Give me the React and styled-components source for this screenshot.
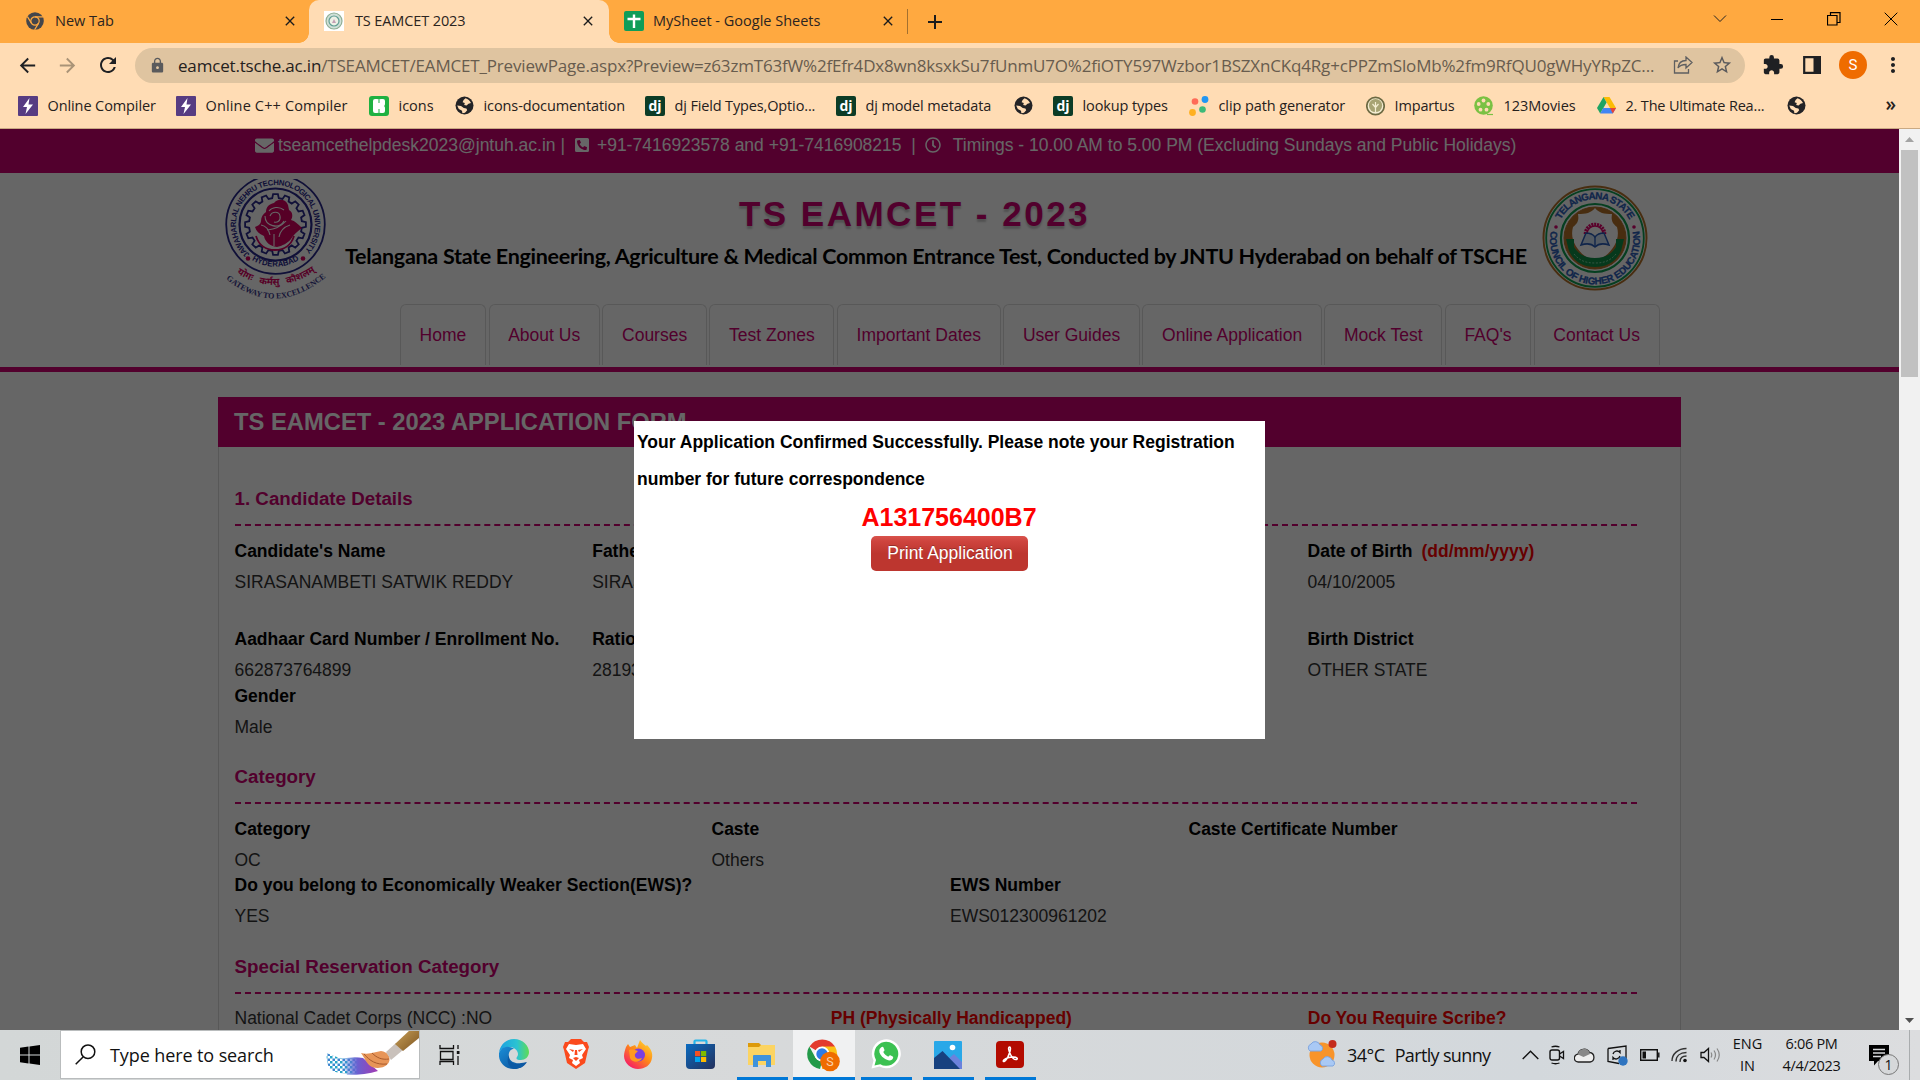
import React from 'react';
import styled, { createGlobalStyle } from 'styled-components';
import { MdLock, MdExtension, MdMoreVert, MdStarBorder, MdArrowBack, MdArrowForward, MdRefresh, MdClose } from 'react-icons/md';
import { FaEnvelope, FaPhoneSquareAlt, FaRegClock } from 'react-icons/fa';

const Global = createGlobalStyle`
  * { box-sizing: border-box; }
  body { margin: 0; overflow: hidden; }
  svg { display: block; flex: none; }
`;

const ui = '"Open Sans", "Noto Sans", sans-serif';
const arial = '"Liberation Sans", Arial, sans-serif';
const magenta = '#cc0070';

const Screen = styled.div`
  width: 1920px;
  height: 1080px;
  display: flex;
  flex-direction: column;
  overflow: hidden;
  font-family: ${ui};
`;

/* ---------- browser chrome ---------- */

const TabStrip = styled.div`
  height: 43px;
  background: #ffa940;
  display: flex;
  align-items: center;
`;

const Tab = styled.div`
  width: ${p => p.$w}px;
  height: 43px;
  padding: 0 ${p => p.$end ?? 13}px 2px ${p => p.$start ?? 15}px;
  display: flex;
  align-items: center;
  gap: ${p => p.$gap ?? 11}px;
  font-size: 14.5px;
  letter-spacing: ${p => p.$ls || 0}px;
  color: #2b2420;
  white-space: nowrap;
  position: relative;
  border-radius: 10px 10px 0 0;
  background: ${p => (p.$active ? '#ffdcb4' : 'transparent')};
  &::before, &::after {
    content: '';
    display: ${p => (p.$active ? 'block' : 'none')};
    position: absolute;
    bottom: 0;
    width: 10px;
    height: 10px;
  }
  &::before { left: -10px; background: radial-gradient(circle at 0 0, transparent 9.5px, #ffdcb4 10px); }
  &::after { right: -10px; background: radial-gradient(circle at 100% 0, transparent 9.5px, #ffdcb4 10px); }
  > svg:last-child { margin-left: auto; }
`;

const TabDivider = styled.div`
  width: 1px;
  height: 25px;
  margin: 0 19px 0 4px;
  background: #a3702f;
`;

const WindowButtons = styled.div`
  margin-left: auto;
  padding: 0 22px 6px 0;
  display: flex;
  align-items: center;
  gap: 43px;
`;

const Toolbar = styled.div`
  height: 44px;
  padding: 0 14px 0 16px;
  background: #ffdcb4;
  display: flex;
  align-items: center;
  color: #1f2023;
`;

const NavButtons = styled.div`
  width: 119px;
  display: flex;
  align-items: center;
  gap: 17px;
`;

const UrlBar = styled.div`
  width: 1610px;
  height: 35px;
  border-radius: 18px;
  background: #dfc4a0;
  padding: 0 12px 0 14px;
  display: flex;
  align-items: center;
  color: #5a5a5c;
`;

const UrlText = styled.div`
  margin-left: 12px;
  width: 1495px;
  font-size: 17px;
  letter-spacing: -0.18px;
  white-space: nowrap;
  color: #685c4e;
  b { font-weight: 400; color: #25211d; }
`;

const StarSlot = styled.span`
  margin-left: auto;
`;

const ToolbarIcons = styled.div`
  flex: 1;
  display: flex;
  align-items: center;
  gap: 18px;
  padding-left: 17px;
  > svg:nth-child(2) { margin-left: 1px; }
  > svg:last-child { margin-left: -4px; }
`;

const Avatar = styled.div`
  width: 28px;
  height: 28px;
  border-radius: 50%;
  background: #ef6c00;
  color: #fff;
  display: flex;
  align-items: center;
  justify-content: center;
  font: 15px Roboto, sans-serif;
`;

const Bookmarks = styled.div`
  height: 42px;
  padding: 0 0 4px 18px;
  background: #ffdcb4;
  border-bottom: 1px solid #c9a983;
  display: flex;
  align-items: center;
  color: #26211c;
`;

const Bookmark = styled.div`
  width: ${p => p.$w}px;
  display: flex;
  align-items: center;
  gap: 9.5px;
  font-size: 14.5px;
  letter-spacing: ${p => p.$ls ?? 0}px;
  white-space: nowrap;
`;

const IconTile = styled.span`
  width: 20px;
  height: 20px;
  flex: none;
  border-radius: ${p => p.$r || 1}px;
  background: ${p => p.$bg};
  color: #fff;
  display: flex;
  align-items: center;
  justify-content: center;
  font: bold 14px "Open Sans", sans-serif;
  letter-spacing: 0;
`;

const More = styled.div`
  margin-left: auto;
  padding: 0 24px 4px 0;
  font-size: 19px;
  font-weight: 600;
`;

/* ---------- web page ---------- */

const Viewport = styled.div`
  height: 901px;
  display: flex;
`;

const PageArea = styled.div`
  position: relative;
  width: 1899px;
  height: 901px;
  overflow: hidden;
  background: #fff;
  font-family: ${arial};
  font-size: 17.5px;
  color: #333;
`;

const Scrollbar = styled.div`
  width: 21px;
  padding: 8px 0 7px;
  background: #f1f1f1;
  display: flex;
  flex-direction: column;
  align-items: center;
`;

const Thumb = styled.div`
  width: 17px;
  height: 227px;
  margin: 8px 0 auto;
  background: #c1c1c1;
`;

const ContactBar = styled.div`
  height: 44px;
  padding: 0 0 12px 255px;
  background: ${magenta};
  color: #fff;
  display: flex;
  align-items: center;
  white-space: pre;
`;

const Contact = styled.span`
  display: flex;
  align-items: center;
  gap: ${p => p.$gap}px;
  margin-right: ${p => p.$end || 0}px;
`;

const Banner = styled.div`
  height: 131px;
  padding: 5px 251px 0 224px;
  display: flex;
  justify-content: space-between;
`;

const LogoSlot = styled.div`
  padding-top: 7px;
`;

const BannerText = styled.div`
  display: flex;
  flex-direction: column;
  align-items: center;
  white-space: nowrap;
`;

const BannerTitle = styled.h1`
  margin: 16px 0 0 -43px;
  font: bold 35px/40px ${arial};
  letter-spacing: 2.5px;
  color: ${magenta};
  text-shadow: 0 3px 2px #ccc, 0 0 3px #eee;
`;

const BannerSub = styled.div`
  margin-top: 9px;
  font: bold 21.5px/26px Lato, sans-serif;
  letter-spacing: -0.29px;
  color: #000;
`;

const Menu = styled.nav`
  height: 63px;
  padding-left: 400px;
  display: flex;
  gap: 2.7px;
`;

const MenuItem = styled.a`
  height: 61px;
  padding: 0 18.6px;
  border: 1px solid #ddd;
  border-bottom: 0;
  border-radius: 6px 6px 0 0;
  line-height: 60px;
  color: ${magenta};
  white-space: nowrap;
`;

const Rule = styled.div`
  height: 5px;
  background: ${magenta};
`;

const Panel = styled.section`
  width: 1463px;
  height: 800px;
  margin: 25px 0 0 218px;
  border: 1px solid #ddd;
  border-top: 0;
`;

const PanelTitle = styled.h2`
  height: 50px;
  margin: 0 -1px;
  padding-left: 16px;
  background: ${magenta};
  color: #fff;
  font: bold 23.75px/50px ${arial};
`;

const PanelBody = styled.div`
  padding: 0 15px 0 15.5px;
`;

const Heading = styled.h3`
  width: 1402px;
  margin: ${p => p.$top}px 0 ${p => p.$after ?? 13}px;
  padding-bottom: 10px;
  border-bottom: 2px dashed ${magenta};
  color: ${magenta};
  font: bold 18.75px/30px ${arial};
`;

const Row = styled.div`
  display: grid;
  grid-template-columns: ${p => p.$cols};
  width: 1431px;
  margin-bottom: ${p => p.$gap || 0}px;
  white-space: nowrap;
`;

const Label = styled.div`
  line-height: 25px;
  margin-bottom: 6px;
  font-weight: bold;
  color: ${p => (p.$red ? '#f00' : '#000')};
  span { color: #f00; margin-left: 4px; }
`;

const Value = styled.div`
  line-height: 25px;
`;

const Overlay = styled.div`
  position: absolute;
  inset: 0;
  background: rgba(0, 0, 0, 0.6);
`;

const Modal = styled.div`
  position: absolute;
  left: 634px;
  top: 292px;
  width: 631px;
  height: 318px;
  padding: 3px;
  background: #fff;
  display: flex;
  flex-direction: column;
  align-items: center;
`;

const Message = styled.p`
  width: 100%;
  margin: 0;
  font-weight: bold;
  line-height: 37px;
  color: #000;
`;

const RegNumber = styled.div`
  padding-right: 1px;
  font: bold 25px/38px ${arial};
  color: #f00;
`;

const PrintButton = styled.button`
  width: 157px;
  height: 35px;
  padding: 0 0 1px 1px;
  border: 0;
  border-radius: 5px;
  background: linear-gradient(#d9534c 0, #ce443e 15%, #bd362f 50%, #bd362f);
  color: #fff;
  font: 17.5px ${arial};
  text-shadow: 0 -1px 0 rgba(0, 0, 0, 0.25);
`;

/* ---------- taskbar ---------- */

const Taskbar = styled.div`
  height: 50px;
  background: linear-gradient(90deg, #d3d7d7, #d7d9da 40%, #d3d8dc 80%, #dcdddf);
  display: flex;
  color: #111;
`;

const Start = styled.div`
  width: 60px;
  display: flex;
  align-items: center;
  justify-content: center;
`;

const SearchBox = styled.div`
  width: 360px;
  height: 49px;
  padding-left: 14px;
  border: 1px solid #b9bcbd;
  background: #fff;
  display: flex;
  align-items: center;
  font-size: 18px;
  letter-spacing: -0.1px;
  white-space: nowrap;
  overflow: hidden;
  > span { width: 219px; margin-left: 14px; }
`;

const Apps = styled.div`
  width: 886px;
  display: flex;
`;

const TaskButton = styled.div`
  width: ${p => p.$w || 62}px;
  height: 50px;
  padding: ${p => p.$top ?? 9}px ${p => p.$end || 0}px 0 0;
  display: flex;
  flex-direction: column;
  align-items: center;
  justify-content: space-between;
  background: ${p => (p.$active ? '#f0f1f2' : 'transparent')};
  &::after {
    content: '';
    width: ${p => (p.$active ? 62 : 51)}px;
    height: 3px;
    background: ${p => (p.$open ? '#0078d7' : 'transparent')};
  }
`;

const Tray = styled.div`
  flex: 1;
  display: flex;
  align-items: center;
  white-space: nowrap;
`;

const Weather = styled.div`
  width: 216px;
  display: flex;
  align-items: center;
  gap: 10px;
  font-size: 18px;
  letter-spacing: -0.5px;
  span:last-child { letter-spacing: -0.65px; }
`;

const TrayIcons = styled.div`
  width: 199px;
  display: flex;
  align-items: center;
  justify-content: space-between;
`;

const Stack = styled.div`
  width: ${p => p.$w}px;
  padding-left: 1px;
  text-align: center;
  font-size: 14.5px;
  line-height: 22.5px;
  letter-spacing: ${p => p.$ls || 0}px;
`;

const Notifications = styled.div`
  position: relative;
  width: 43px;
  height: 50px;
  margin-left: 18px;
  padding: 15px 0 0 2px;
  border-right: 1px solid #a9acae;
`;

const Badge = styled.span`
  position: absolute;
  left: 11px;
  top: 24px;
  width: 21px;
  height: 21px;
  border: 1px solid #777;
  border-radius: 50%;
  background: #d6d8da;
  text-align: center;
  font-size: 14px;
  line-height: 19px;
`;

/* ---------- drawings ---------- */

const ChromeMono = () => (
  <svg width="18" height="18" viewBox="0 0 18 18">
    <circle cx="9" cy="9" r="8.8" fill="#44464b" />
    <circle cx="9" cy="9" r="4.2" fill="none" stroke="#ffa940" strokeWidth="1.2" />
    <path d="M9 4.8h8M5.4 11.1L1.4 4.6M12.6 11.1L8.6 17.8" stroke="#ffa940" strokeWidth="1.2" />
  </svg>
);

const CrestIcon = () => (
  <svg width="20" height="20" viewBox="0 0 20 20">
    <rect width="20" height="20" fill="#fff" />
    <circle cx="10" cy="10" r="8" fill="#cfe0d8" stroke="#8fae95" strokeWidth="1.2" />
    <circle cx="10" cy="10" r="5" fill="#eef0e6" stroke="#5f9e93" strokeWidth="1.2" />
    <path d="M8 12l2-4 2 4z" fill="#c3a0b4" />
  </svg>
);

const SheetIcon = () => (
  <svg width="20" height="20" viewBox="0 0 20 20">
    <rect width="20" height="20" rx="2" fill="#0f9d58" />
    <path d="M10 3.5v13.5M3.5 8h13" stroke="#fff" strokeWidth="2.4" />
  </svg>
);

const Globe = () => (
  <svg width="19" height="19" viewBox="0 0 19 19">
    <circle cx="9.5" cy="9.5" r="9" fill="#232326" />
    <path d="M10.500 2.200c2.500.8 4.500 2.600 5.500 4.800l-2.500.8-2 1.800-2.300-.6.600-2-2.200-.8 1-2.200zM2.200 9.500l3.800.6 2.800 1.900 2.600.6.800 1.600-2.200 2.600-2.600.4-.4-2.400-3.200-1.800z" fill="#ffdcb4" />
  </svg>
);

const Bolt = () => (
  <IconTile $bg="#573c82">
    <svg width="12" height="16" viewBox="0 0 12 16"><path d="M7.5 0L1 9h4l-1.500 7L11 6.500H6.500z" fill="#fff" /></svg>
  </IconTile>
);

const Icons8 = () => (
  <IconTile $bg="#1fb141" $r={3}>
    <svg width="12" height="14" viewBox="0 0 12 14"><path d="M0 2q0-2 2-2h2q1.500 0 2 1 .5-1 2-1h2q2 0 2 2v3q0 1.500-1 2 1 .5 1 2v3q0 2-2 2H8q-1.500 0-2-1-.5 1-2 1H2q-2 0-2-2z" fill="#fff" /><path d="M6 1v3M6 10v3" stroke="#1fb141" strokeWidth="1" /></svg>
  </IconTile>
);

const Dj = () => <IconTile $bg="#0c3c26" $r={2}>dj</IconTile>;

const Dots = () => (
  <svg width="20" height="20" viewBox="0 0 20 20">
    <circle cx="16" cy="3.500" r="3.400" fill="#2196f3" />
    <circle cx="6" cy="5.500" r="3.300" fill="#ff6b57" />
    <circle cx="13.500" cy="13.500" r="3.300" fill="#3dba78" />
    <circle cx="3.500" cy="16.500" r="3.400" fill="#ffb020" />
  </svg>
);

const TreeIcon = () => (
  <svg width="19" height="20" viewBox="0 0 19 20">
    <circle cx="9.500" cy="10" r="8.700" fill="#f3edd2" stroke="#6d6a43" strokeWidth="1.700" />
    <circle cx="9.500" cy="9.500" r="6.600" fill="#a7a373" />
    <path d="M9.500 6v11M6.500 8l3 3.500 3-3.500" stroke="#f3edd2" strokeWidth="1.200" fill="none" />
  </svg>
);

const Reel = () => (
  <svg width="20" height="20" viewBox="0 0 20 20">
    <circle cx="9.500" cy="9.500" r="9.300" fill="#7ac143" />
    <g fill="#ffdcb4">
      <circle cx="9.500" cy="4.500" r="1.900" /><circle cx="4.700" cy="8" r="1.900" /><circle cx="14.300" cy="8" r="1.900" />
      <circle cx="6.500" cy="13.700" r="1.900" /><circle cx="12.500" cy="13.700" r="1.900" />
    </g>
    <path d="M13 18.500h6" stroke="#7ac143" strokeWidth="1.200" />
  </svg>
);

const Drive = () => (
  <svg width="19" height="17" viewBox="0 0 19 17">
    <path d="M6.500 0h6L19 11h-6z" fill="#fbbc04" />
    <path d="M6.500 0l3.100 5.400L3.200 16.500 0 11z" fill="#1fa463" />
    <path d="M6.200 11H19l-3.200 5.500H3.200z" fill="#4285f4" />
    <path d="M13 11h6l-3.200 5.500z" fill="#ea4335" />
  </svg>
);

const gearPoints = (() => {
  const pts = [];
  const n = 16;
  for (let i = 0; i < n; i++) {
    [[-0.32, 26.5], [-0.2, 30.5], [0.2, 30.5], [0.32, 26.5]].forEach(([o, r]) => {
      const a = ((i + o) / n) * Math.PI * 2;
      pts.push(`${(51.5 + r * Math.sin(a)).toFixed(1)},${(46.5 - r * Math.cos(a)).toFixed(1)}`);
    });
  }
  return pts.join(' ');
})();

const JntuLogo = () => (
  <svg width="106" height="123" viewBox="0 0 106 123">
    <defs>
      <path id="jTop" d="M25.700 76.200A39.400 39.400 0 1 1 77.300 76.200" />
      <path id="jBottom" d="M15.800 71A45 45 0 0 0 87.200 71" />
      <path id="jHindi" d="M8 92Q51 123 96 90" />
      <path id="jGate" d="M2 101Q51 141 102 99" />
      <clipPath id="jClip"><rect y="1" width="106" height="122" /></clipPath>
    </defs>
    <g fill="none" stroke="#2a2a8c" clipPath="url(#jClip)">
      <circle cx="51.500" cy="46.500" r="49.300" strokeWidth="1.800" />
      <circle cx="51.500" cy="46.500" r="36" strokeWidth="2.200" />
      <polygon points={gearPoints} strokeWidth="1.800" />
    </g>
    <g fontFamily="Liberation Sans" fontWeight="bold" fill="#2a2a8c" fontSize="7.800">
      <text><textPath href="#jTop" textLength="186">JAWAHARLAL NEHRU TECHNOLOGICAL UNIVERSITY</textPath></text>
      <text><textPath href="#jBottom" startOffset="50%" textAnchor="middle">HYDERABAD</textPath></text>
    </g>
    <g fill="#d8005f">
      <circle cx="24" cy="80.500" r="2.300" /><circle cx="79" cy="80.500" r="2.300" />
      <path d="M50 25c4-5 12-4 14 2l1 5c4 2 4 7 2 10 4 1 7 4 11 8-5 4-9 7-11 11-3 4-9 7-14 8-7-1-12-5-13-11-5-2-8-5-9-9 3-1 6-3 6-6 0-4 2-7 5-9 0-5 3-8 8-9z" />
    </g>
    <path d="M46 38c2-5 9-5 10 0s-3 7-6 6M41 38c0 10 14 14 19 5M43 52c6-1 13-2 19-9M50 56v12M37 47c5 1 8 5 9 10M66 47c-6 2-10 6-11 12M45 33c3-4 10-5 15-1" fill="none" stroke="#fff" strokeWidth="1.100" />
    <path d="M32 58c3 10 11 14 19 14s16-4 19-14" fill="none" stroke="#d8005f" strokeWidth="1.800" />
    <text fontFamily="Noto Sans Devanagari, Noto Sans, sans-serif" fontWeight="bold" fontSize="9.500" fill="#d8005f">
      <textPath href="#jHindi" startOffset="50%" textAnchor="middle" wordSpacing="5">योगः कर्मसु कौशलम्</textPath>
    </text>
    <text fontFamily="Liberation Serif" fontWeight="bold" fontSize="8" fill="#39398c">
      <textPath href="#jGate" startOffset="50%" textAnchor="middle">GATEWAY TO EXCELLENCE</textPath>
    </text>
  </svg>
);

const TscheLogo = () => (
  <svg width="106" height="106" viewBox="0 0 106 106">
    <defs>
      <path id="tTop" d="M17.500 37A39 39 0 0 1 88.500 37" />
      <path id="tBottom" d="M9 45A45 45 0 1 0 97 45" />
    </defs>
    <g fill="none">
      <circle cx="53" cy="53" r="51.500" fill="#fff" stroke="#b5722a" strokeWidth="2" />
      <circle cx="53" cy="53" r="48.800" stroke="#0f9d50" strokeWidth="1.800" />
      <circle cx="53" cy="53" r="34" stroke="#0f9d50" strokeWidth="2.200" />
      <circle cx="53" cy="53" r="31" fill="#b5722a" stroke="#b5722a" strokeWidth="1" />
    </g>
    <g fontFamily="Liberation Sans" fontWeight="bold" fontSize="9.800" fill="#2a5cb8" stroke="#2a5cb8" strokeWidth=".3">
      <text><textPath href="#tTop" startOffset="50%" textAnchor="middle" textLength="84">TELANGANA STATE</textPath></text>
      <text><textPath href="#tBottom" startOffset="50%" textAnchor="middle" textLength="158">COUNCIL OF HIGHER EDUCATION</textPath></text>
    </g>
    <circle cx="14" cy="42" r="1.800" fill="#d6006e" /><circle cx="92" cy="42" r="1.800" fill="#d6006e" />
    <path d="M53 23c4 5 9 6 17 6-1 6 0 9 5 13 4 14-6 28-22 35-16-7-26-21-22-35 5-4 6-7 5-13 8 0 13-1 17-6z" fill="#fff" />
    <path d="M43.500 49a9.500 9.500 0 0 1 19 0" fill="none" stroke="#e0006a" strokeWidth="3.600" strokeDasharray="2 .8" />
    <path d="M45 49a8 8 0 0 1 16 0" fill="#fff" stroke="#e0006a" strokeWidth="1.500" />
    <path d="M39 60l5-12q6 0 9 4 3-4 9-4l5 12q-9-3-14 2-5-5-14-2z" fill="#cfe0f5" stroke="#2a5cb8" strokeWidth="1.500" />
    <path d="M53 52v10" stroke="#2a5cb8" strokeWidth="1.400" />
    <path d="M24 54h8v8c5 8 12 11 21 11s16-3 21-11v-8h8l-3 12c-5 11-14 16-26 16s-21-5-26-16z" fill="#118f48" />
    <path d="M32 69c6 7 12 9 21 9s15-2 21-9" fill="none" stroke="#7fcf9f" strokeWidth="1" strokeDasharray="2 1.500" />
  </svg>
);

const Brush = () => (
  <svg width="94" height="47" viewBox="0 0 94 47">
    <defs>
      <pattern id="dots" width="5" height="5" patternUnits="userSpaceOnUse">
        <rect width="2.500" height="2.500" fill="#28a5c8" /><rect x="2.500" y="2.500" width="2.500" height="2.500" fill="#3b86cf" />
      </pattern>
      <linearGradient id="paint"><stop offset="0" stopColor="#4a86d8" stopOpacity=".1" /><stop offset=".45" stopColor="#6b5fd0" /><stop offset="1" stopColor="#a33bb3" /></linearGradient>
      <linearGradient id="wood" x1="0" y1="0" x2="1" y2="1"><stop offset="0" stopColor="#caa25a" /><stop offset="1" stopColor="#7d5420" /></linearGradient>
    </defs>
    <path d="M2 22c8 4 14 6 22 5l12 0v16c-12 0-24 0-30-4-4-5-5-10-4-17z" fill="url(#dots)" />
    <path d="M16 28q12-3 22-1l15 13q-12 4-31 4z" fill="url(#paint)" />
    <path d="M36 22c8 2 14-1 20-2 7 1 10 6 8 11-3 6-11 7-17 5-6-3-7-9-11-14z" fill="#e79558" />
    <path d="M39 23c6 7 12 11 23 10M47 22c5 5 10 7 17 6" stroke="#a85a2c" fill="none" strokeWidth="1" />
    <path d="M61 21l10-9 7 7-12 10z" fill="#c9c1bb" />
    <path d="M70 13L86 -2h8v9L78 20z" fill="url(#wood)" />
  </svg>
);

const Edge = () => (
  <svg width="30" height="30" viewBox="0 0 30 30">
    <defs>
      <linearGradient id="eTop"><stop offset="0" stopColor="#1ba0e1" /><stop offset=".6" stopColor="#2bc3d2" /><stop offset="1" stopColor="#5fdc54" /></linearGradient>
      <linearGradient id="eLow" x1="0" y1="0" x2="1" y2="1"><stop offset="0" stopColor="#1a8fd8" /><stop offset="1" stopColor="#0b4a94" /></linearGradient>
    </defs>
    <path d="M0 14C1 5 8 0 15 0c9 0 15 7 15 13 0 5-4 8-8 8-5 0-5-2-4-3 3-4-1-10-8-10C5 8 1 11 0 14z" fill="url(#eTop)" />
    <path d="M0 14c2-5 6-7 10-6 2 0 4 1 5 2-4 0-6 4-5 8 1 5 7 7 12 6 3 0 5-1 6-1-3 5-8 7-13 7C6 30-1 23 0 14z" fill="url(#eLow)" />
    <path d="M10 16c-1 7 5 10 11 9 3 0 5-1 6-2-3 5-7 7-12 7-6-2-8-9-5-14z" fill="#0c59a4" />
  </svg>
);

const Brave = () => (
  <svg width="26" height="30" viewBox="0 0 26 30">
    <path d="M8 0h10l3 3 3 0 2 5-1 3-3 13-9 6-9-6L1 11 0 8l2-5 3 0z" fill="#fb4a1d" />
    <path d="M6 5l7 1 7-1 3 5-4 6 1 3-4 2 1 3-4 3-4-3 1-3-4-2 1-3-4-6z" fill="#fff" />
    <path d="M6 10l5 1-1 2zM20 10l-5 1 1 2zM10 19l3-1 3 1-3 3zM12 11h2l.5 5h-3z" fill="#fb4a1d" />
  </svg>
);

const Firefox = () => (
  <svg width="29" height="29" viewBox="0 0 29 29">
    <defs><linearGradient id="ff" x1="1" y1="0" x2=".2" y2="1"><stop offset="0" stopColor="#ffe53b" /><stop offset=".5" stopColor="#ff8a16" /><stop offset="1" stopColor="#f5156c" /></linearGradient></defs>
    <path d="M2 7l2-3 2 3 5-2 2 3 3-8c2 3 4 4 6 6l1-1c4 4 6 8 5 13-1 7-7 11-14 11S0 23 0 16c0-3 1-6 2-9z" fill="url(#ff)" />
    <circle cx="14.500" cy="15" r="6.500" fill="#7a3fe0" />
    <path d="M5 10c3-1 6 0 9 1l-3 3c-1 4 3 6 7 4-2 5-10 5-12 0z" fill="#ff9a1f" />
  </svg>
);

const Store = () => (
  <svg width="29" height="30" viewBox="0 0 29 30">
    <defs><linearGradient id="st" x1="0" y1="0" x2="1" y2="1"><stop offset="0" stopColor="#0a6bc0" /><stop offset="1" stopColor="#24305c" /></linearGradient></defs>
    <path d="M8.500 7V2.500q0-1 1-1h10q1 0 1 1V7" fill="none" stroke="#26b5ea" strokeWidth="2.200" />
    <path d="M0 5h29v21q0 4-4 4H4q-4 0-4-4z" fill="url(#st)" />
    <path d="M9 12h5.200v5.200H9z" fill="#f25022" /><path d="M15 12h5.200v5.200H15z" fill="#7fba00" />
    <path d="M9 18h5.200v5H9z" fill="#00a4ef" /><path d="M15 18h5.200v5H15z" fill="#ffb900" />
  </svg>
);

const Folder = () => (
  <svg width="28" height="24" viewBox="0 0 28 24">
    <path d="M0 0h11l2 2v3H0z" fill="#dd9a0a" />
    <path d="M0 4h11l2-2h14v20H0z" fill="#fcd462" />
    <path d="M5 13q0-1 1-1h16q1 0 1 1v11h-5v-6h-8v6H5z" fill="#3f93dc" />
  </svg>
);

const ChromeColor = () => (
  <svg width="34" height="34" viewBox="0 0 34 34">
    <path d="M15 15L2.500 7.500A15 15 0 0 1 28 7.500z" fill="#e33b2e" />
    <path d="M15 15V7.500h13A15 15 0 0 1 15 30z" fill="#fbc116" />
    <path d="M2.300 7.500L8.600 19 15 22.500 13 30A15 15 0 0 1 2.300 7.500z" fill="#229a49" />
    <circle cx="15" cy="15" r="7.500" fill="#fff" /><circle cx="15" cy="15" r="5.700" fill="#2c7be5" />
    <circle cx="23" cy="22.500" r="9.800" fill="#ef6c00" />
    <text x="23" y="27" textAnchor="middle" fontFamily="Roboto" fontSize="12.500" fill="#fbd0ac">S</text>
  </svg>
);

const WhatsApp = () => (
  <svg width="30" height="30" viewBox="0 0 30 30">
    <path d="M.5 29.500L2.500 21.500A14.500 14.500 0 1 1 8.500 27.500z" fill="#fff" />
    <path d="M3.500 26.500l1.500-5.500a12 12 0 1 1 4.300 4.200z" fill="#3cc152" />
    <path d="M10 8.500c1-1 2-1 2.500 0l1 2.500c0 1-1 1.500-1.200 2 1 2.200 2.700 3.700 5 4.700.6-.3 1-1.500 2-1.400l2.400 1.200c1 .6.300 2-.5 2.900-2 1.800-5 1-7.700-.8C10 17.300 8 14 8.300 11.500c.1-1.200.8-2.200 1.700-3z" fill="#fff" />
  </svg>
);

const Photos = () => (
  <svg width="28" height="28" viewBox="0 0 28 28">
    <rect width="28" height="28" rx="1" fill="#29a8e8" />
    <path d="M13 19l7-6 8 8v7H13z" fill="#6b82dc" />
    <path d="M0 17L8.500 10 26 28H0z" fill="#17417f" />
    <circle cx="18.500" cy="6.500" r="2.800" fill="#fff" />
  </svg>
);

const Acrobat = () => (
  <svg width="28" height="28" viewBox="0 0 28 28">
    <rect width="28" height="27" rx="4" fill="#b30b00" />
    <path d="M13.700 6c-2 0-1 4 .8 7.500 1.700 3.200 4.200 5.500 6 5 1.700-.8.500-2.600-3-2.600-3.600 0-7.500 1-9.500 2.800-1.500 1.500-.3 2.600 1 1.300 2-2 4-6 5-9.500.6-2.500.7-4.500-.3-4.500z" fill="none" stroke="#fff" strokeWidth="1.500" />
  </svg>
);

const bookmarks = [
  [158, <Bolt />, 'Online Compiler', -0.1],
  [193, <Bolt />, 'Online C++ Compiler', 0.15],
  [86, <Icons8 />, 'icons', 0],
  [190, <Globe />, 'icons-documentation', -0.1],
  [191, <Dj />, 'dj Field Types,Optio...', -0.14],
  [178, <Dj />, 'dj model metadata', -0.12],
  [39, <Globe />, '', 0],
  [136, <Dj />, 'lookup types', -0.1],
  [177, <Dots />, 'clip path generator', -0.1],
  [108, <TreeIcon />, 'Impartus', -0.15],
  [123, <Reel />, '123Movies', -0.05],
  [190, <Drive />, '2. The Ultimate Rea...', -0.18],
  [39, <Globe />, '', 0],
];

const menu = ['Home', 'About Us', 'Courses', 'Test Zones', 'Important Dates', 'User Guides', 'Online Application', 'Mock Test', "FAQ's", 'Contact Us'];

const Field = ({ label, value }) => (
  <div>
    <Label>{label}</Label>
    <Value>{value}</Value>
  </div>
);

const four = 'repeat(4, 357.7px)';

export default function App() {
  return (
    <Screen>
      <Global />
      <TabStrip>
        <Tab $w={309} $start={26} $end={11}><ChromeMono />New Tab<MdClose size={16} color="#1c1c1c" /></Tab>
        <Tab $w={300} $active $ls={-0.12}><CrestIcon />TS EAMCET 2023<MdClose size={16} color="#1c1c1c" /></Tab>
        <Tab $w={294} $end={7} $gap={9}><SheetIcon />MySheet - Google Sheets<MdClose size={16} color="#1c1c1c" /></Tab>
        <TabDivider />
        <svg width="16" height="16" viewBox="0 0 16 16"><path d="M8 1v14M1 8h14" stroke="#1c1c1c" strokeWidth="2" /></svg>
        <WindowButtons>
          <svg width="14" height="8" viewBox="0 0 14 8"><path d="M1 .5l6 6 6-6" fill="none" stroke="#222" /></svg>
          <svg width="14" height="14" viewBox="0 0 14 14"><path d="M1 7.500h12" stroke="#000" /></svg>
          <svg width="14" height="14" viewBox="0 0 14 14"><path d="M.5 3.500h9.500v9.500H.5zM3.500 3V.7h9.500v9.800H10.500" fill="none" stroke="#000" strokeWidth="1.200" /></svg>
          <svg width="14" height="14" viewBox="0 0 14 14"><path d="M.7.7l12.600 12.600M13.300.7L.7 13.300" stroke="#000" /></svg>
        </WindowButtons>
      </TabStrip>

      <Toolbar>
        <NavButtons>
          <MdArrowBack size={23} />
          <MdArrowForward size={23} color="#a99377" />
          <MdRefresh size={24} />
        </NavButtons>
        <UrlBar>
          <MdLock size={17} />
          <UrlText><b>eamcet.tsche.ac.in</b>/TSEAMCET/EAMCET_PreviewPage.aspx?Preview=z63zmT63fW%2fEfr4Dx8wn8ksxkSu7fUnmU7O%2fiOTY597Wzbor1BSZXnCKq4Rg+cPPZmSloMb%2fm9RfQU0gWHyYRpZC...</UrlText>
          <svg width="20" height="18" viewBox="0 0 20 18"><path d="M5 5H1.500v12h14v-4M5 12c.5-5 4-7.500 8-7.500V1l6 5.500-6 5.500V8.500c-3.500 0-6 .5-8 3.500z" fill="none" stroke="#5f5f60" strokeWidth="1.300" /></svg>
          <StarSlot><MdStarBorder size={22} /></StarSlot>
        </UrlBar>
        <ToolbarIcons>
          <MdExtension size={22} />
          <svg width="18" height="18" viewBox="0 0 18 18"><path d="M1.200 1.200h15.600v15.600H1.200z" fill="none" stroke="#1f2023" strokeWidth="2.200" /><path d="M10.500 0H18v18h-7.500z" fill="#1f2023" /></svg>
          <Avatar>S</Avatar>
          <MdMoreVert size={24} />
        </ToolbarIcons>
      </Toolbar>

      <Bookmarks>
        {bookmarks.map(([w, icon, label, ls], i) => (
          <Bookmark key={i} $w={w} $ls={ls}>{icon}{label}</Bookmark>
        ))}
        <More>»</More>
      </Bookmarks>

      <Viewport>
        <PageArea>
          <ContactBar>
            <Contact $gap={4} $end={9}><FaEnvelope size={19} />tseamcethelpdesk2023@jntuh.ac.in |</Contact>
            <Contact $gap={7} $end={9}><FaPhoneSquareAlt size={16} />+91-7416923578 and +91-7416908215  |</Contact>
            <Contact $gap={12}><FaRegClock size={16} />Timings - 10.00 AM to 5.00 PM (Excluding Sundays and Public Holidays)</Contact>
          </ContactBar>
          <Banner>
            <JntuLogo />
            <BannerText>
              <BannerTitle>TS EAMCET - 2023</BannerTitle>
              <BannerSub>Telangana State Engineering, Agriculture &amp; Medical Common Entrance Test, Conducted by JNTU Hyderabad on behalf of TSCHE</BannerSub>
            </BannerText>
            <LogoSlot><TscheLogo /></LogoSlot>
          </Banner>
          <Menu>{menu.map(m => <MenuItem key={m}>{m}</MenuItem>)}</Menu>
          <Rule />
          <Panel>
            <PanelTitle>TS EAMCET - 2023 APPLICATION FORM</PanelTitle>
            <PanelBody>
              <Heading $top={37}>1. Candidate Details</Heading>
              <Row $cols={four} $gap={32}>
                <Field label="Candidate's Name" value="SIRASANAMBETI SATWIK REDDY" />
                <Field label="Father's Name" value="SIRASANAMBETI" />
                <div />
                <Field label={<>Date of Birth <span>(dd/mm/yyyy)</span></>} value="04/10/2005" />
              </Row>
              <Row $cols={four} $gap={1}>
                <Field label="Aadhaar Card Number / Enrollment No." value="662873764899" />
                <Field label="Ration Card" value="28193" />
                <div />
                <Field label="Birth District" value="OTHER STATE" />
              </Row>
              <Row $cols={four}>
                <Field label="Gender" value="Male" />
              </Row>
              <Heading $top={22}>Category</Heading>
              <Row $cols="repeat(3, 477px)">
                <Field label="Category" value="OC" />
                <Field label="Caste" value="Others" />
                <Field label="Caste Certificate Number" />
              </Row>
              <Row $cols="repeat(2, 715.5px)">
                <Field label="Do you belong to Economically Weaker Section(EWS)?" value="YES" />
                <Field label="EWS Number" value="EWS012300961202" />
              </Row>
              <Heading $top={23} $after={12}>Special Reservation Category</Heading>
              <Row $cols="596.25px 477px 357.75px">
                <Value>National Cadet Corps (NCC) :NO</Value>
                <Label $red>PH (Physically Handicapped)</Label>
                <Label $red>Do You Require Scribe?</Label>
              </Row>
            </PanelBody>
          </Panel>
          <Overlay />
          <Modal>
            <Message>Your Application Confirmed Successfully. Please note your Registration number for future correspondence</Message>
            <RegNumber>A131756400B7</RegNumber>
            <PrintButton>Print Application</PrintButton>
          </Modal>
        </PageArea>
        <Scrollbar>
          <svg width="9" height="5" viewBox="0 0 9 5"><path d="M4.500 0L9 5H0z" fill="#a3a3a3" /></svg>
          <Thumb />
          <svg width="9" height="5" viewBox="0 0 9 5"><path d="M4.500 5L9 0H0z" fill="#505050" /></svg>
        </Scrollbar>
      </Viewport>

      <Taskbar>
        <Start>
          <svg width="20" height="20" viewBox="0 0 20 20"><path d="M0 2.800l8.500-1.200v8H0zM9.500 1.500L20 0v9.600H9.500zM0 10.500h8.500v8L0 17.300zM9.500 10.500H20V20L9.500 18.600z" fill="#000" /></svg>
        </Start>
        <SearchBox>
          <svg width="21" height="21" viewBox="0 0 21 21"><circle cx="13" cy="7.700" r="6.800" fill="none" stroke="#111" strokeWidth="1.500" /><path d="M8.300 12.700L.7 20.300" stroke="#111" strokeWidth="1.500" /></svg>
          <span>Type here to search</span>
          <Brush />
        </SearchBox>
        <Apps>
          <TaskButton $top={15} $w={63} $end={4}>
            <svg width="21" height="20" viewBox="0 0 21 20"><path d="M1 0v3.500h13.500V0M1.500 6.500h12.500v8H1.500zM1 20v-3.500h13.500V20M19 0v4M19 11v9" fill="none" stroke="#111" strokeWidth="1.300" /><path d="M17.800 6h2.700v3h-2.700z" fill="#111" /></svg>
          </TaskButton>
          <TaskButton><Edge /></TaskButton>
          <TaskButton><Brave /></TaskButton>
          <TaskButton $top={10}><Firefox /></TaskButton>
          <TaskButton><Store /></TaskButton>
          <TaskButton $open $top={13}><Folder /></TaskButton>
          <TaskButton $open $active><ChromeColor /></TaskButton>
          <TaskButton $open><WhatsApp /></TaskButton>
          <TaskButton $open $top={11}><Photos /></TaskButton>
          <TaskButton $open $top={11}><Acrobat /></TaskButton>
        </Apps>
        <Tray>
          <Weather>
            <svg width="31" height="30" viewBox="0 0 31 30">
              <circle cx="16" cy="15" r="12.500" fill="#f8942a" />
              <path d="M4 11a4 4 0 0 1 1-7 5 5 0 0 1 9 1 3.300 3.300 0 0 1 1 6z" fill="#a9c9f5" stroke="#7fa6e0" />
              <path d="M16 26a4 4 0 0 1 1-7 5 5 0 0 1 9 1 3.300 3.300 0 0 1 1 6z" fill="#a9c9f5" stroke="#7fa6e0" />
              <circle cx="26.500" cy="4" r="4" fill="#c42b1c" />
            </svg>
            <span>34°C</span><span>Partly sunny</span>
          </Weather>
          <TrayIcons>
            <svg width="17" height="10" viewBox="0 0 17 10"><path d="M.7 9l7.800-7.800L16.300 9" fill="none" stroke="#111" strokeWidth="1.400" /></svg>
            <svg width="12" height="20" viewBox="2 0 12 20" overflow="visible"><rect x="1" y="5" width="9.500" height="10" rx="2" fill="none" stroke="#111" strokeWidth="1.400" /><path d="M10.500 9l4-2.500v7L10.500 11M2.500 2q4-1.500 8 0M2.500 18q4 1.500 8 0" fill="none" stroke="#111" strokeWidth="1.300" /></svg>
            <svg width="21" height="15" viewBox="0 0 21 15"><path d="M4.500 14a3.900 3.900 0 0 1-.5-7.800A6.200 6.200 0 0 1 15.500 4.500a4.800 4.800 0 0 1 .5 9.500z" fill="#eee" stroke="#222" strokeWidth="1.300" /><path d="M4 6.500a6 6 0 0 1 11.500-2L16 6l-6.500 3z" fill="#888" /></svg>
            <svg width="21" height="21" viewBox="0 0 21 21"><path d="M1 3.500L19 1v15M1 3.500v13l11 2" fill="none" stroke="#111" strokeWidth="1.300" /><path d="M6 9a4 4 0 0 1 7-1.500V5M13 11a4 4 0 0 1-7 1.500V15" fill="none" stroke="#111" strokeWidth="1.300" /><circle cx="16" cy="16" r="4.700" fill="#2e74c0" /></svg>
            <svg width="20" height="12" viewBox="0 0 20 12"><path d="M.7.700h16.600v10.600H.7zM18.800 3.500v5" fill="none" stroke="#111" strokeWidth="1.400" /><path d="M2.500 2.500H6v7H2.500z" fill="#111" /></svg>
            <svg width="17" height="16" viewBox="0 0 17 16"><path d="M1 14C1 7 7 1.500 15.500 1.500M5 14.500C5 9 9 5.500 15.500 5.500M9 15c0-4 2.500-6 6.500-6" fill="none" stroke="#333" strokeWidth="1.400" /><circle cx="14" cy="13.500" r="1.800" fill="#111" /></svg>
            <svg width="21" height="16" viewBox="0 0 21 16"><path d="M1 5.500h3L8.500 1.500v13L4 10.500H1z" fill="none" stroke="#111" strokeWidth="1.300" /><path d="M11 5.500q1.500 2.500 0 5M14 3.500q3 4.500 0 9M17 1.500q4.500 6.500 0 13" fill="none" stroke="#888" strokeWidth="1.200" /></svg>
          </TrayIcons>
          <Stack $w={52} $ls={0}>ENG<br />IN</Stack>
          <Stack $w={76} $ls={-0.3}>6:06 PM<br />4/4/2023</Stack>
          <Notifications>
            <svg width="21" height="21" viewBox="0 0 21 21"><path d="M0 0h20v16H9l-4 4.500V16H0z" fill="#000" /><path d="M4 4.500h12M4 8h12M4 11.500h8" stroke="#d6d8da" strokeWidth="1.300" /></svg>
            <Badge>1</Badge>
          </Notifications>
        </Tray>
      </Taskbar>
    </Screen>
  );
}
